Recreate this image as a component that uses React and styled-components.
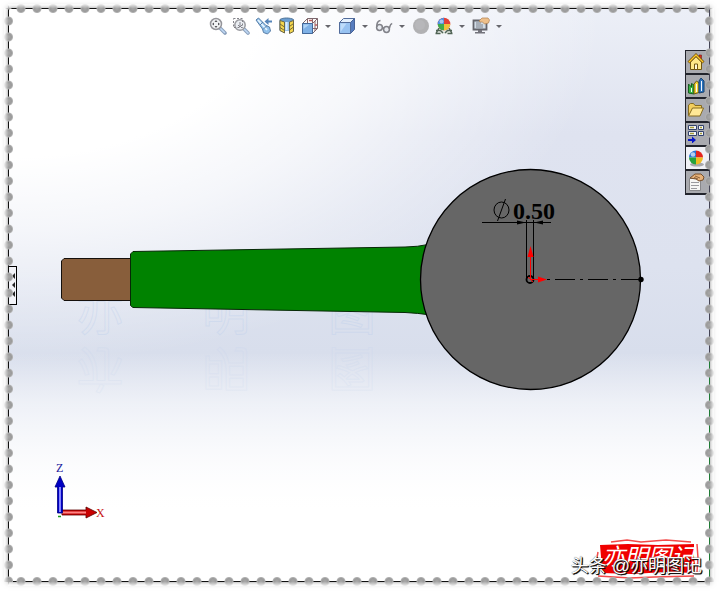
import { useState } from 'react'
import styled, { createGlobalStyle, css } from 'styled-components'

const GlobalStyle = createGlobalStyle`
  * { box-sizing: border-box; }
  body {
    margin: 0;
    background: #fff;
    font-family: "Liberation Sans", "Noto Sans CJK SC", sans-serif;
  }
  button { padding: 0; border: 0; background: none; cursor: pointer; }
  svg { display: block; }
`

function ZoomFitIcon() {
  return (
    <svg width="18" height="18" viewBox="0 0 18 18">
      <path d="M11 11l5 5" stroke="#7f96b5" strokeWidth="3.600" strokeLinecap="round" />
      <path d="M11.500 11.500l4 4" stroke="#b9d5f4" strokeWidth="1.600" strokeLinecap="round" />
      <circle cx="7" cy="7" r="5.500" fill="#f1f2f4" stroke="#8a8a90" strokeWidth="1.500" />
      <path d="M7 3l1.500 2h-3zM7 11l1.500-2h-3zM3 7l2-1.500v3zM11 7L9 5.500v3z" fill="#44444a" />
    </svg>
  )
}

function ZoomAreaIcon() {
  return (
    <svg width="18" height="18" viewBox="0 0 18 18">
      <path d="M12 12l4 4" stroke="#7f96b5" strokeWidth="3.600" strokeLinecap="round" />
      <path d="M12 12l4 4" stroke="#b9d5f4" strokeWidth="1.600" strokeLinecap="round" />
      <circle cx="8" cy="8" r="5.200" fill="#e9edf2" stroke="#8f9096" strokeWidth="1.500" />
      <path d="M1.500 1.500h9v9h-9z" fill="none" stroke="#77777e" strokeDasharray="2 1.500" />
      <path d="M8 5v5M6 8l2 2 2-2" fill="none" stroke="#74747c" />
    </svg>
  )
}

function PreviousViewIcon() {
  return (
    <svg width="18" height="18" viewBox="0 0 18 18">
      <path d="M1 3l2.500-2L11 8.500l3.500 1.500 1 4-3 3-4-1.500-1-3.500z" fill="#86bbe9" stroke="#47719f" strokeLinejoin="round" />
      <path d="M3 3l9 10" stroke="#e4f4ff" strokeWidth="1.800" />
      <path d="M5 8l3-3M8 12.500l4-4" stroke="#47719f" />
      <path d="M9.500 4.500l4-3.500v2.500H17v2h-3.500V8z" fill="#4478b2" />
    </svg>
  )
}

function SectionViewIcon() {
  return (
    <svg width="18" height="18" viewBox="0 0 18 18">
      <path d="M2 2.500C5 .5 12 .5 15.500 2.500V14l-4 1V6.500H6.500V15L2 13.500z" fill="#5b93cd" stroke="#3f678f" />
      <path d="M6.500 5h5v9h-5z" fill="#8fc0ee" />
      <path d="M2 3.500L6.500 5v11L2 13.500zM11.500 5l4-1.500v11l-4 2z" fill="#f4d23b" stroke="#5d5730" />
      <path d="M2 7l4.500 3M2 10.500l4.500 3M11.500 9.500l4-3M11.500 13l4-3" stroke="#685b20" />
      <path d="M8.500 5v8" stroke="#d9edff" strokeWidth="2" />
    </svg>
  )
}

function OrientationIcon() {
  return (
    <svg width="18" height="18" viewBox="0 0 18 18">
      <path d="M1.500 6.500l5-5h10v10l-5 5h-10z" fill="#fbfafa" stroke="#6c5960" />
      <path d="M6.500 1.500v5M16.500 1.500l-5 5M11.500 1.500v5M12 11.500h4.500M14 4v10" stroke="#7e565b" />
      <path d="M8 3.500h3M14 8h2" stroke="#b84b4b" strokeWidth="1.300" />
      <path d="M1.500 6.500h10v10h-10z" fill="#72a9e4" stroke="#305a91" />
      <path d="M2.500 12V7.500h6z" fill="#a8d0f6" />
    </svg>
  )
}

function DisplayStyleIcon() {
  return (
    <svg width="18" height="18" viewBox="0 0 18 18">
      <path d="M1.500 5.500l4-4h11l-4 4z" fill="#e2f0ff" stroke="#405d91" strokeLinejoin="round" />
      <path d="M12.500 5.500l4-4v11l-4 4z" fill="#456fb8" stroke="#34528d" strokeLinejoin="round" />
      <path d="M1.500 5.500h11v11h-11z" fill="#8dbcf0" stroke="#405d91" strokeLinejoin="round" />
      <path d="M2.500 15V6.500h6z" fill="#b8d9fa" />
    </svg>
  )
}

function GlassesIcon() {
  return (
    <svg width="18" height="18" viewBox="0 0 18 18" fill="none" stroke="#75767d" strokeWidth="1.500">
      <circle cx="4.500" cy="10.500" r="2.900" fill="#e7eaf0" />
      <circle cx="11.500" cy="12.500" r="2.900" fill="#e7eaf0" />
      <path d="M1.800 10C1.500 6 3 4 5.500 3.500M7 10.500l2 1M14.200 12c1-3 .5-5 3-5.500" />
    </svg>
  )
}

function SphereIcon() {
  return (
    <svg width="18" height="18" viewBox="0 0 18 18">
      <circle cx="9" cy="9" r="8" fill="#aaaaac" />
      <circle cx="8" cy="8" r="5" fill="#b1b1b3" />
    </svg>
  )
}

function SceneIcon() {
  return (
    <svg width="18" height="18" viewBox="0 0 18 18">
      <path d="M3 11h12l2.500 6H.5z" fill="#e6ebe6" />
      <path d="M4 11l-3 5.500M14 11l3 5.500M5 13l3 3M13 13l-3 3M1 13.500h4M13 13.500h4M.5 16.500h5M12.500 16.500h5" stroke="#3f5444" strokeWidth="1.500" />
      <circle cx="9" cy="7" r="6.300" fill="#e02d25" />
      <path d="M9 7V.7A6.300 6.300 0 0 0 2.700 7z" fill="#3d83df" />
      <path d="M9 7H2.700A6.300 6.300 0 0 0 9 13.300z" fill="#2ba53b" />
      <path d="M9 7v6.300A6.300 6.300 0 0 0 15.300 7z" fill="#f0bd26" />
      <circle cx="6.500" cy="4.500" r="2" fill="#fff" opacity=".5" />
    </svg>
  )
}

function ViewSettingsIcon() {
  return (
    <svg width="18" height="18" viewBox="0 0 18 18">
      <path d="M1.500 3.500h13v9h-13z" fill="#cfdae5" stroke="#55555c" strokeWidth="1.800" />
      <path d="M4 6h5M4 8h7M4 10h7" stroke="#737780" />
      <path d="M6 13h4v2h3v1.500H3V15h3z" fill="#66666e" />
      <path d="M7 4l3-3h6l1.500 2-1 3-4 1-2-2H8z" fill="#eebb80" stroke="#a9743d" strokeWidth=".7" />
    </svg>
  )
}

function HomeIcon() {
  return (
    <svg width="18" height="18" viewBox="0 0 18 18">
      <path d="M12 2h2.500v5H12z" fill="#d62b20" stroke="#741e18" strokeWidth=".6" />
      <path d="M3.500 9L9 3.500 14.500 9v7.500h-11z" fill="#ffe98a" stroke="#715711" />
      <path d="M1.500 9.500L9 2l7.500 7.500" fill="none" stroke="#6e5010" strokeWidth="2.800" />
      <path d="M1.800 9.200L9 2l7.200 7.200" fill="none" stroke="#ffc928" strokeWidth="1.300" />
      <path d="M7.500 11h3v5.500h-3z" fill="#fff9dc" stroke="#715711" />
    </svg>
  )
}

function LibraryIcon() {
  return (
    <svg width="18" height="18" viewBox="0 0 18 18">
      <path d="M1.500 7l3 3V6.500L7 8v9l-5.500-1z" fill="#38b440" stroke="#155e20" />
      <path d="M7 7l2.500-3L12 6v9.500L7 17z" fill="#f6d334" stroke="#675813" />
      <path d="M12 4l2-3 3 3v11l-5 1z" fill="#2b72ba" stroke="#174273" />
      <path d="M9.500 7v8M14.500 4v10M4.500 11v4" stroke="#f5f8ff" />
    </svg>
  )
}

function FolderIcon() {
  return (
    <svg width="18" height="18" viewBox="0 0 18 18">
      <path d="M1.500 14V4l2-1.500h3L8 4.500h6.500V7" fill="#f4cf5e" stroke="#866b20" />
      <path d="M1.500 15l4-8h11L13 15z" fill="#ffe896" stroke="#866b20" strokeLinejoin="round" />
    </svg>
  )
}

function PaletteIcon() {
  return (
    <svg width="18" height="18" viewBox="0 0 18 18">
      <path d="M1.500.5h8v4h-8zM11.500.5h5v4h-5zM1.500 6.500h8v4h-8zM11.500 6.500h5v4h-5z" fill="#f4f6fb" stroke="#33436c" />
      <path d="M3 2.500h4M13 2.500h2M3 8.500h4M13 8.500h2" stroke="#a69d3a" strokeWidth="1.500" />
      <path d="M1 14h4v-2.500l4 3.500-4 3.500V16H1z" fill="#0717c9" />
    </svg>
  )
}

function AppearanceIcon() {
  return (
    <svg width="18" height="18" viewBox="0 0 18 18">
      <ellipse cx="10" cy="15.500" rx="7" ry="2" fill="#a8a8ac" />
      <path d="M9 1.500a7 7 0 0 1 7 7H9z" fill="#e5251d" />
      <path d="M9 1.500a7 7 0 0 0-7 7h7z" fill="#2874d6" />
      <path d="M2 8.500a7 7 0 0 0 7 7v-7z" fill="#26a33b" />
      <path d="M9 15.500a7 7 0 0 0 7-7H9z" fill="#efbd24" />
      <circle cx="6" cy="5.500" r="2.300" fill="#fff" opacity=".65" />
    </svg>
  )
}

function PropertiesIcon() {
  return (
    <svg width="18" height="18" viewBox="0 0 18 18">
      <path d="M2.500 5.500h11v12h-11z" fill="#f6f6f4" stroke="#88888b" />
      <path d="M4 9.500h8M4 12.500h8M4 15.500h6" stroke="#9a9a9e" />
      <path d="M3 5l5-4h6l3 3-1 3-4 1-3-2z" fill="#e7b279" stroke="#79512d" />
      <path d="M8 3l5 2M7 4.500l4 1.500" stroke="#79512d" strokeWidth=".8" />
    </svg>
  )
}

const viewTools = [
  { name: 'Zoom to fit', Icon: ZoomFitIcon },
  { name: 'Zoom to area', Icon: ZoomAreaIcon },
  { name: 'Previous view', Icon: PreviousViewIcon },
  { name: 'Section view', Icon: SectionViewIcon },
  { name: 'View orientation', Icon: OrientationIcon, menu: true },
  { name: 'Display style', Icon: DisplayStyleIcon, menu: true },
  { name: 'Hide or show items', Icon: GlassesIcon, menu: true },
  { name: 'Edit appearance', Icon: SphereIcon },
  { name: 'Apply scene', Icon: SceneIcon, menu: true },
  { name: 'View settings', Icon: ViewSettingsIcon, menu: true },
]

const taskTabs = [
  { name: 'Resources', Icon: HomeIcon },
  { name: 'Design library', Icon: LibraryIcon },
  { name: 'File explorer', Icon: FolderIcon },
  { name: 'View palette', Icon: PaletteIcon },
  { name: 'Appearances', Icon: AppearanceIcon },
  { name: 'Custom properties', Icon: PropertiesIcon },
]

function ModelView() {
  return (
    <Drawing viewBox="8 8 702 574" role="img" aria-label="Model front view">
      {/* floor lettering and its reflection */}
      <FloorText x="76" y="330">亦</FloorText>
      <FloorText x="202" y="330">明</FloorText>
      <FloorText x="328" y="330">图</FloorText>
      <g transform="translate(0 684) scale(1 -1)" opacity="0.4">
        <FloorText x="76" y="332">亦</FloorText>
        <FloorText x="202" y="332">明</FloorText>
        <FloorText x="328" y="332">图</FloorText>
      </g>

      {/* handle */}
      <path d="M64 258.500h66.500v42H64l-2.500-2.500v-37z" fill="#885e3b" stroke="#15100c" />
      <path
        d="M133 251.500L405 247q12 0 26-3v71q-14-2-26-2.500L133 307.500l-2.500-2v-51.500z"
        fill="#008200"
        stroke="#062806"
      />
      <circle cx="530.500" cy="279.500" r="110" fill="#666" stroke="#000" strokeWidth="1.300" />

      {/* diameter dimension */}
      <g stroke="#000" fill="none">
        <ellipse cx="501.500" cy="210" rx="7.500" ry="8" />
        <path d="M497.500 221l8-22M482 222.500h69M526.500 220v58M533.500 220v58" />
      </g>
      <path d="M526 222.500l-9-2v4zM534 222.500l9-2v4z" />
      <DimensionText x="513" y="219">0.50</DimensionText>

      {/* origin */}
      <path d="M547 279.500h94" stroke="#000" strokeDasharray="3 5 20 5" />
      <circle cx="641" cy="279.500" r="2.700" />
      <circle cx="530" cy="279.500" r="3.500" fill="#666" stroke="#000" strokeWidth="1.800" />
      <path d="M530.500 279.500V256M530.500 279.500H540M528 277l5 5" stroke="#f00" fill="none" />
      <path d="M530.500 246l-3 11h6zM547 279.500l-9-3v6z" fill="#f00" />

      {/* axes */}
      <path d="M58 516.500h3" stroke="#1a9a1a" strokeWidth="1.500" fill="none" />
      <path d="M62 510h24v-3l11 5.500-11 5.500v-3H62z" fill="#c80000" stroke="#5e0000" strokeWidth=".8" />
      <path d="M62 512.500h24" stroke="#ff8484" strokeWidth="2" />
      <path d="M57.500 513v-26H55l5-11 5 11h-2.500v26z" fill="#0000c4" stroke="#000080" strokeWidth=".8" />
      <path d="M60 512v-25" stroke="#8585ff" strokeWidth="2" />
      <AxisText x="56" y="472" fill="#1b1b9c">Z</AxisText>
      <AxisText x="96" y="517" fill="#c81515">X</AxisText>
    </Drawing>
  )
}

function Seal() {
  return (
    <svg width="110" height="42" viewBox="0 0 110 42" aria-hidden="true">
      <path d="M8 7l28-1 30 1 36-1v12l1 9-1 8-28-1-34 2-30-1-1-16z" fill="#f00000" />
      <path d="M19 4l16-2 14 2 25-2 25 2M6 14l-2 11 2 6M105 6l1 14-1 14M6 38l32 2 24-1 40-1" fill="none" stroke="#f34a4a" strokeWidth="1.500" />
      <SealText x="10" y="27">亦明图记</SealText>
    </svg>
  )
}

function App() {
  const [activeTab, setActiveTab] = useState('Appearances')

  return (
    <Page>
      <GlobalStyle />
      <Stage>
        <ModelView />
        <Controls>
          <Toolbar>
            {viewTools.map(({ name, Icon, menu }) => (
              <ToolGroup key={name}>
                <ToolButton aria-label={name}><Icon /></ToolButton>
                {menu && <MenuButton aria-label={`${name} options`} />}
              </ToolGroup>
            ))}
          </Toolbar>
          <TaskPane>
            {taskTabs.map(({ name, Icon }) => (
              <TaskTab
                key={name}
                aria-label={name}
                $active={name === activeTab}
                onClick={() => setActiveTab(name)}
              >
                <Icon />
              </TaskTab>
            ))}
          </TaskPane>
        </Controls>
        <PanelHandle aria-label="Show feature tree">
          <HandleArrow />
          <HandleArrow />
          <HandleArrow />
        </PanelHandle>
        <Signature>
          <Seal />
          <Author>头条 @亦明图记</Author>
        </Signature>
        <Edge $side="top" />
        <Edge $side="bottom" />
        <Edge $side="left" />
        <Edge $side="right" />
      </Stage>
    </Page>
  )
}

export default App

const Page = styled.main`
  padding: 8px 9px 10px 8px;
`

const Stage = styled.div`
  position: relative;
  display: grid;
  background:
    linear-gradient(to bottom, rgba(255, 255, 255, 0) 60%, rgba(255, 255, 255, 0.5) 69%, #fff 88%),
    radial-gradient(ellipse 85% 62% at 0% 0%, #fff 0%, #fff 42%, rgba(255, 255, 255, 0.7) 62%, rgba(255, 255, 255, 0.3) 82%, rgba(255, 255, 255, 0) 100%),
    linear-gradient(to bottom, #eceff7 0%, #dfe3f0 22%, #dde2ef 45%, #d8deec 60%, #dfe4f0 70%, #fff 90%);
  box-shadow: 0 0 6px 0 rgba(0, 0, 0, 0.5);

  > * {
    grid-area: 1 / 1;
  }
`

const Drawing = styled.svg`
  width: 100%;
`

const FloorText = styled.text`
  font-family: "Noto Sans CJK SC", sans-serif;
  font-size: 48px;
  fill: none;
  stroke: #b9cdec;
  stroke-width: 1px;
  stroke-opacity: 0.35;
`

const DimensionText = styled.text`
  font: bold 24px "Liberation Serif", serif;
`

const AxisText = styled.text`
  font: 12px "Liberation Serif", serif;
  stroke: currentColor;
  stroke-width: 0;
`

const SealText = styled.text`
  font: italic 23px "Noto Sans CJK SC", sans-serif;
  fill: #fff;
`

const Controls = styled.div`
  display: flex;
  flex-direction: column;
  gap: 15px;
  padding-top: 9px;
`

const Toolbar = styled.div`
  display: flex;
  justify-content: center;
  gap: 5px;
  padding-right: 6px;
`

const ToolGroup = styled.div`
  display: flex;
  align-items: center;
  gap: 5px;
`

const ToolButton = styled.button`
  width: 18px;
  height: 18px;
  opacity: 0.9;
`

const MenuButton = styled.button`
  display: grid;
  place-items: center;
  width: 9px;
  height: 18px;

  &::after {
    content: "";
    border: 3px solid transparent;
    border-top-color: #66666c;
    border-bottom: 0;
  }
`

const TaskPane = styled.nav`
  display: flex;
  flex-direction: column;
  align-self: flex-end;
  width: 25px;
  border-top: 1px solid #22242c;
`

const TaskTab = styled.button`
  display: grid;
  place-items: center;
  height: 24px;
  padding-right: 4px;
  border: solid #22242c;
  border-width: 0 0 2px 1px;
  background: ${({ $active }) => ($active ? '#f0f1f6' : '#a9aaaf')};
`

const PanelHandle = styled.button`
  display: flex;
  flex-direction: column;
  align-items: center;
  justify-content: center;
  gap: 3px;
  align-self: center;
  justify-self: start;
  width: 9px;
  height: 39px;
  margin-bottom: 20px;
  padding-left: 2px;
  border: 1px solid #000;
  background: #f2f3f8;
`

const HandleArrow = styled.span`
  border: 3px solid transparent;
  border-right-color: #222;
  border-left: 0;
`

const Signature = styled.div`
  display: grid;
  align-self: end;
  justify-self: end;
  justify-items: end;
  margin: 0 8px 2px 0;

  > * {
    grid-area: 1 / 1;
  }
`

const Author = styled.span`
  align-self: end;
  color: #fff;
  font-size: 18px;
  line-height: 28px;
  white-space: nowrap;
  text-shadow: 1px 1px 0 #111, 1px 1px 1px #000, 0 0 1px #333;
`

const outward = { top: 'to top', bottom: 'to bottom', left: 'to left', right: 'to right' }

const bead = 'radial-gradient(circle at 50% 50%, #a8a8a8 0, #9a9a9a 3px, #b0b0b0 4px, rgba(176, 176, 176, 0) 5px)'

const fadeOut = css`
  linear-gradient(${({ $side }) => outward[$side]}, rgba(255, 255, 255, 0) 50%, rgba(255, 255, 255, 0.7) 90%)
`

const horizontal = css`
  left: 0;
  right: 0;
  height: 9px;
  background:
    ${fadeOut},
    ${bead} 5px 0 / 16px 9px repeat-x,
    linear-gradient(#111, #111) 0 4px / 100% 1px no-repeat;
`

const vertical = css`
  top: 0;
  bottom: 0;
  width: 9px;
  background:
    ${fadeOut},
    ${bead} 0 5px / 9px 16px repeat-y,
    ${({ $side }) => ($side === 'right'
      ? 'linear-gradient(#445 0 61%, #1f7a35 61%)'
      : 'linear-gradient(#111, #111)')} 4px 0 / 1px 100% no-repeat;
`

// perforated border, each strip is centred on one edge of the stage
const Edge = styled.div`
  position: absolute;
  pointer-events: none;
  ${({ $side }) => ($side === 'top' || $side === 'bottom' ? horizontal : vertical)}
  ${({ $side }) => `${$side}: -4px;`}
`
